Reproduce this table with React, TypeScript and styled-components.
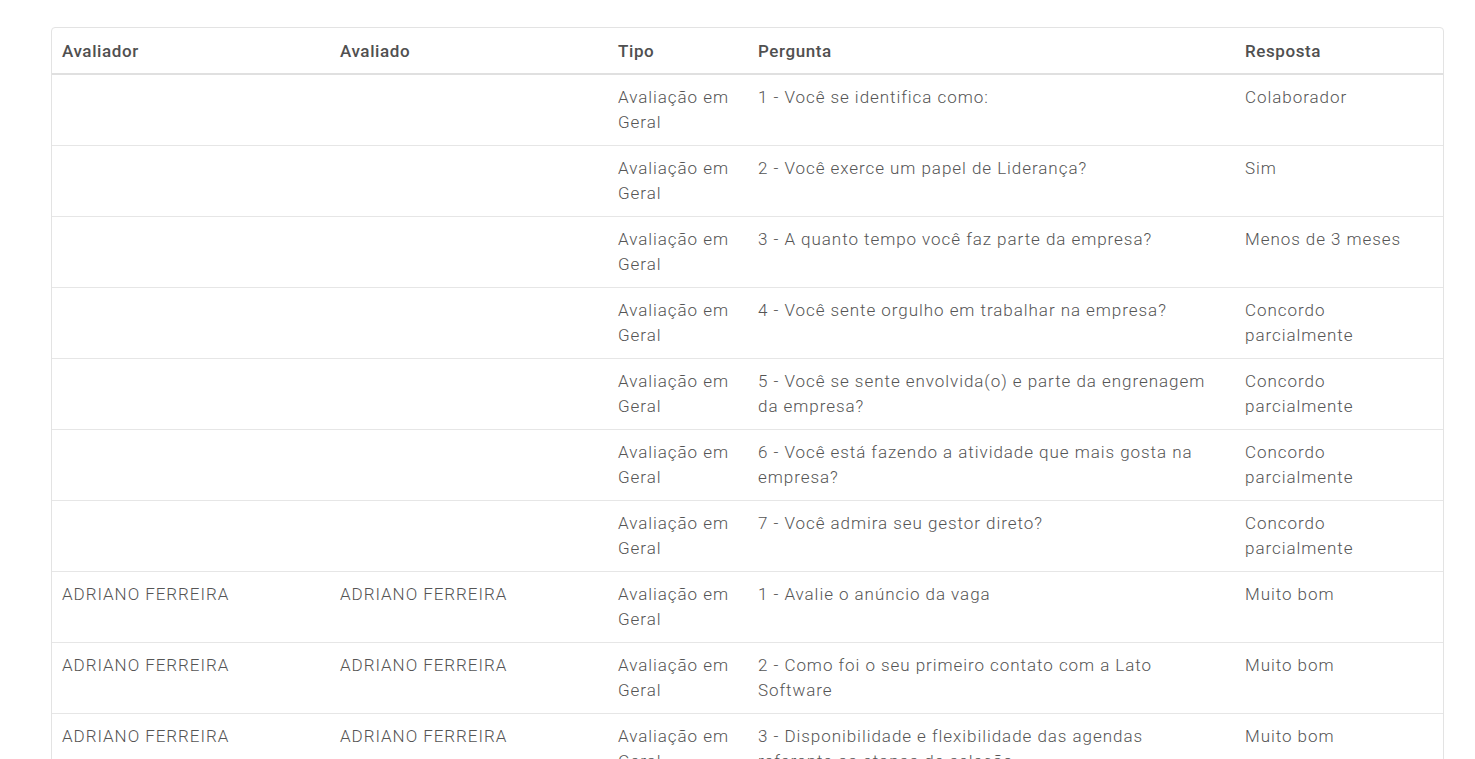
import React from "react";
import styled, { createGlobalStyle } from "styled-components";

const Global = createGlobalStyle`
  html, body { margin: 0; padding: 0; background: #fff; }
  body { font-family: Roboto, "Liberation Sans", sans-serif; }
`;

const Page = styled.div`
  padding: 27px 31px 0 51px;
`;

const Card = styled.div`
  border: 1px solid #e3e3e3;
  border-radius: 4px;
  overflow: hidden;
`;

const Table = styled.table`
  width: 100%;
  border-collapse: collapse;
  table-layout: fixed;
`;

const HeadCell = styled.th`
  text-align: left;
  font-weight: 500;
  font-size: 17px;
  line-height: 24px;
  color: #505050;
  letter-spacing: 0.6px;
  padding: 11px 10px 10px;
  border-bottom: 2px solid #e0e0e0;
`;

const Row = styled.tr`
  & + & td { border-top: 1px solid #e6e6e6; }
`;

const Cell = styled.td<{ $padEnd: number }>`
  vertical-align: top;
  font-size: 17px;
  font-weight: 300;
  line-height: 25px;
  color: #555;
  letter-spacing: 0.95px;
  padding: 10px ${(p) => p.$padEnd}px 10px 10px;
`;

const cols = [
  { w: 278, pad: 10 },
  { w: 278, pad: 10 },
  { w: 140, pad: 10 },
  { w: 487, pad: 20 },
  { w: 208, pad: 10 },
];

const rows: [string, string, string, string, string][] = [
  ["", "", "Avaliação em Geral", "1 - Você se identifica como:", "Colaborador"],
  ["", "", "Avaliação em Geral", "2 - Você exerce um papel de Liderança?", "Sim"],
  ["", "", "Avaliação em Geral", "3 - A quanto tempo você faz parte da empresa?", "Menos de 3 meses"],
  ["", "", "Avaliação em Geral", "4 - Você sente orgulho em trabalhar na empresa?", "Concordo parcialmente"],
  ["", "", "Avaliação em Geral", "5 - Você se sente envolvida(o) e parte da engrenagem da empresa?", "Concordo parcialmente"],
  ["", "", "Avaliação em Geral", "6 - Você está fazendo a atividade que mais gosta na empresa?", "Concordo parcialmente"],
  ["", "", "Avaliação em Geral", "7 - Você admira seu gestor direto?", "Concordo parcialmente"],
  ["ADRIANO FERREIRA", "ADRIANO FERREIRA", "Avaliação em Geral", "1 - Avalie o anúncio da vaga", "Muito bom"],
  ["ADRIANO FERREIRA", "ADRIANO FERREIRA", "Avaliação em Geral", "2 - Como foi o seu primeiro contato com a Lato Software", "Muito bom"],
  ["ADRIANO FERREIRA", "ADRIANO FERREIRA", "Avaliação em Geral", "3 - Disponibilidade e flexibilidade das agendas referente as etapas de seleção", "Muito bom"],
];

export default function App() {
  return (
    <Page>
      <Global />
      <Card>
        <Table>
          <colgroup>
            {cols.map((c, i) => (
              <col key={i} style={{ width: c.w }} />
            ))}
          </colgroup>
          <thead>
            <tr>
              <HeadCell>Avaliador</HeadCell>
              <HeadCell>Avaliado</HeadCell>
              <HeadCell>Tipo</HeadCell>
              <HeadCell>Pergunta</HeadCell>
              <HeadCell>Resposta</HeadCell>
            </tr>
          </thead>
          <tbody>
            {rows.map((r, i) => (
              <Row key={i}>
                {r.map((c, j) => (
                  <Cell key={j} $padEnd={cols[j].pad}>
                    {c}
                  </Cell>
                ))}
              </Row>
            ))}
          </tbody>
        </Table>
      </Card>
    </Page>
  );
}
